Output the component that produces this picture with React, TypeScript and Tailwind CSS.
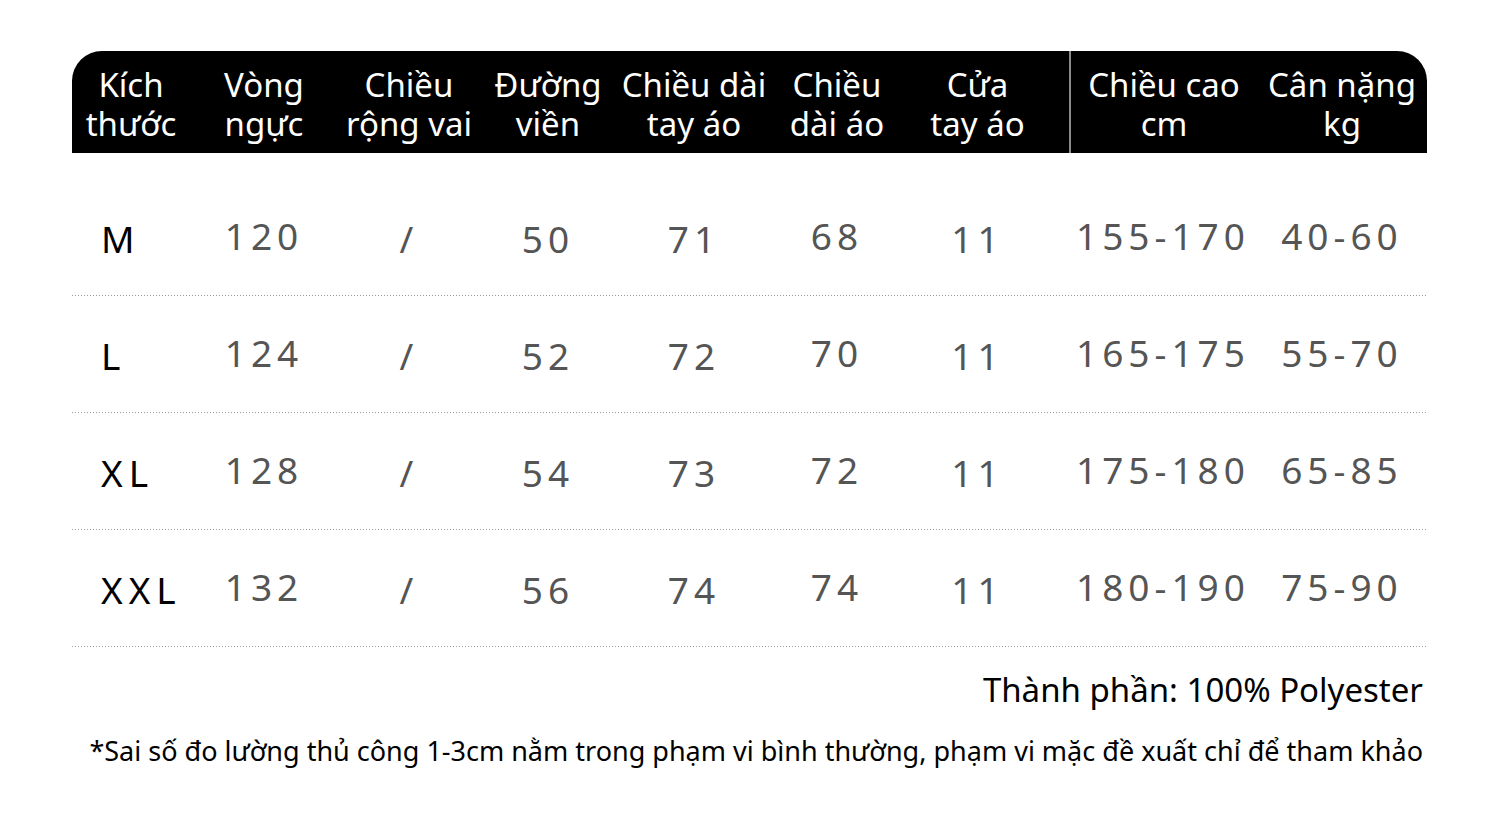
const headers = [
  ["Kích", "thước"],
  ["Vòng", "ngực"],
  ["Chiều", "rộng vai"],
  ["Đường", "viền"],
  ["Chiều dài", "tay áo"],
  ["Chiều", "dài áo"],
  ["Cửa", "tay áo"],
  ["Chiều cao", "cm"],
  ["Cân nặng", "kg"],
]

const rows = [
  ["M", "120", "/", "50", "71", "68", "11", "155-170", "40-60"],
  ["L", "124", "/", "52", "72", "70", "11", "165-175", "55-70"],
  ["XL", "128", "/", "54", "73", "72", "11", "175-180", "65-85"],
  ["XXL", "132", "/", "56", "74", "74", "11", "180-190", "75-90"],
]

// column widths in px, picked so each centre sits where the chart has it
const cols = "grid-cols-[118px_148px_142px_136px_156px_130px_167px_188px_170px]"

// some columns in the chart sit a few px lower than others
const lower = [true, false, true, true, true, false, true, false, false]

export default function App() {
  return (
    <div className="w-[1500px] h-[827px] bg-white overflow-hidden" style={{ fontFamily: '"Noto Sans", "Open Sans", sans-serif' }}>
      <div className="pt-[51px] pl-[72px] w-[1427px]">
        <div className={`grid ${cols} h-[102px] bg-black rounded-t-[30px] text-white text-[33px] leading-[39px]`}>
          {headers.map((h, i) => (
            <div
              key={i}
              className={`flex flex-col items-center justify-center pt-[3px] ${i === 7 ? "border-l-2 border-[#8a8a8a]" : ""} ${i === 6 ? "pr-[16px]" : ""}`}
            >
              <span className="whitespace-nowrap">{h[0]}</span>
              <span className="whitespace-nowrap">{h[1]}</span>
            </div>
          ))}
        </div>

        <div className="pt-[26px]">
          {rows.map((r) => (
            <div key={r[0]}>
              <div className={`grid ${cols} h-[116px]`}>
                {r.map((v, i) => (
                  <div
                    key={i}
                    className={`flex items-center ${i === 0 ? "justify-start pl-[29px] text-black tracking-[6px]" : "justify-center text-[#555] tracking-[5px]"} ${i === 6 ? "pr-[16px]" : ""} ${lower[i] ? "pt-[4px]" : "pb-[2px]"} text-[37px]`}
                  >
                    {v}
                  </div>
                ))}
              </div>
              <div className="h-[1px] bg-[repeating-linear-gradient(to_right,#9a9a9a_0px,#9a9a9a_1px,transparent_1px,transparent_3px)]" />
            </div>
          ))}
        </div>

        <div className="flex flex-col items-end pr-[4px] text-black">
          <p className="mt-[21px] text-[33px] leading-[44px]">Thành phần: 100% Polyester</p>
          <p className="mt-[21px] text-[27px] leading-[36px] whitespace-nowrap">
            *Sai số đo lường thủ công 1-3cm nằm trong phạm vi bình thường, phạm vi mặc đề xuất chỉ để tham khảo
          </p>
        </div>
      </div>
    </div>
  )
}
